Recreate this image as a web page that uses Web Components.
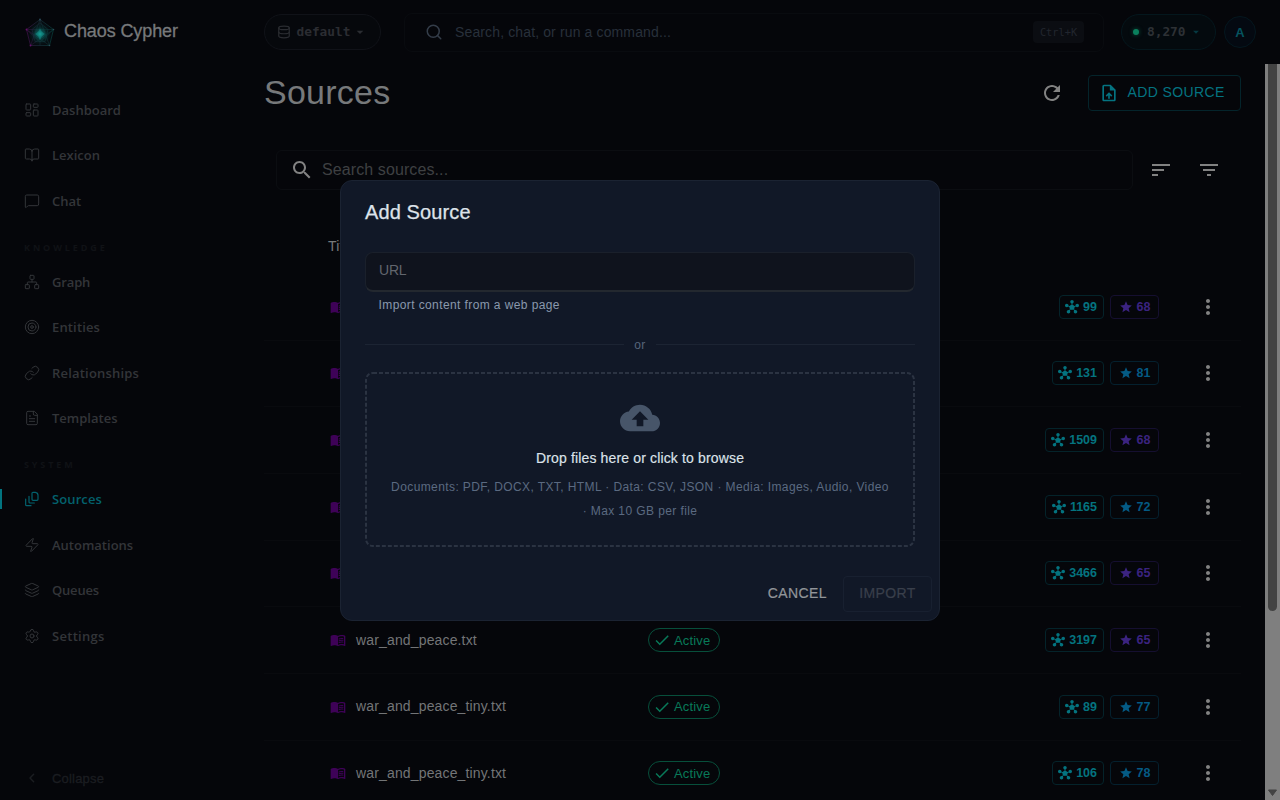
<!DOCTYPE html>
<html lang="en">
<head>
<meta charset="utf-8">
<title>Chaos Cypher – Sources</title>
<style>
html,body{margin:0;height:100%;background:#05060a;overflow:hidden}
body{font-family:"Liberation Sans",Arial,sans-serif}
</style>
</head>
<body>
<cc-app></cc-app>
<script>
const line = (w, body) => `<g fill="none" stroke="currentColor" stroke-width="${w}" stroke-linecap="round" stroke-linejoin="round">${body}</g>`;
const ICONS = {
  dashboard: line(1.5, '<rect width="7" height="9" x="3" y="3" rx="1"/><rect width="7" height="5" x="14" y="3" rx="1"/><rect width="7" height="9" x="14" y="12" rx="1"/><rect width="7" height="5" x="3" y="16" rx="1"/>'),
  lexicon: line(1.5, '<path d="M12 7v14"/><path d="M3 18a1 1 0 0 1-1-1V4a1 1 0 0 1 1-1h5a4 4 0 0 1 4 4 4 4 0 0 1 4-4h5a1 1 0 0 1 1 1v13a1 1 0 0 1-1 1h-6a3 3 0 0 0-3 3 3 3 0 0 0-3-3z"/>'),
  chat: line(1.5, '<path d="M22 17a2 2 0 0 1-2 2H6.83a2 2 0 0 0-1.42.59l-2.2 2.2A.71.71 0 0 1 2 21.29V5a2 2 0 0 1 2-2h16a2 2 0 0 1 2 2z"/>'),
  graph: line(1.5, '<rect x="16" y="16" width="6" height="6" rx="1"/><rect x="2" y="16" width="6" height="6" rx="1"/><rect x="9" y="2" width="6" height="6" rx="1"/><path d="M5 16v-3a1 1 0 0 1 1-1h12a1 1 0 0 1 1 1v3M12 12V8"/>'),
  entities: line(1.5, '<circle cx="12" cy="12" r="10"/><circle cx="12" cy="12" r="6"/><circle cx="12" cy="12" r="2"/>'),
  link: line(1.5, '<path d="M10 13a5 5 0 0 0 7.54.54l3-3a5 5 0 0 0-7.07-7.07l-1.72 1.71"/><path d="M14 11a5 5 0 0 0-7.54-.54l-3 3a5 5 0 0 0 7.07 7.07l1.71-1.71"/>'),
  template: line(1.5, '<path d="M15 2H6a2 2 0 0 0-2 2v16a2 2 0 0 0 2 2h12a2 2 0 0 0 2-2V7Z"/><path d="M14 2v4a2 2 0 0 0 2 2h4M10 9H8M16 13H8M16 17H8"/>'),
  stack: line(1.8, '<path d="M21 6.500v6c0 .8-.7 1.500-1.500 1.500h-6c-.8 0-1.500-.7-1.500-1.500v-9c0-.8.7-1.500 1.500-1.500H17c2.200.3 4 2.200 4 4.500Z"/><path d="M7.500 8v8.500c0 .8.7 1.500 1.500 1.500h6.500"/><path d="M2.500 12v8.500c0 .8.7 1.500 1.500 1.500h6.500"/>'),
  zap: line(1.5, '<path d="M4 14a1 1 0 0 1-.78-1.63l9.9-10.2a.5.5 0 0 1 .86.46l-1.92 6.02A1 1 0 0 0 13 10h7a1 1 0 0 1 .78 1.63l-9.9 10.2a.5.5 0 0 1-.86-.46l1.92-6.02A1 1 0 0 0 11 14z"/>'),
  layers: line(1.5, '<path d="M12.83 2.18a2 2 0 0 0-1.66 0L2.6 6.08a1 1 0 0 0 0 1.83l8.58 3.91a2 2 0 0 0 1.66 0l8.58-3.9a1 1 0 0 0 0-1.83z"/><path d="M2 12a1 1 0 0 0 .58.91l8.6 3.91a2 2 0 0 0 1.65 0l8.58-3.9A1 1 0 0 0 22 12"/><path d="M2 17a1 1 0 0 0 .58.91l8.6 3.91a2 2 0 0 0 1.65 0l8.58-3.9A1 1 0 0 0 22 17"/>'),
  settings: line(1.5, '<path d="M9.671 4.136a2.34 2.34 0 0 1 4.659 0 2.34 2.34 0 0 0 3.319 1.915 2.34 2.34 0 0 1 2.33 4.033 2.34 2.34 0 0 0 0 3.831 2.34 2.34 0 0 1-2.33 4.033 2.34 2.34 0 0 0-3.319 1.915 2.34 2.34 0 0 1-4.659 0 2.34 2.34 0 0 0-3.32-1.915 2.34 2.34 0 0 1-2.33-4.033 2.34 2.34 0 0 0 0-3.831A2.34 2.34 0 0 1 6.35 6.051a2.34 2.34 0 0 0 3.319-1.915"/><circle cx="12" cy="12" r="3"/>'),
  back: line(2.2, '<path d="m14.5 17.5-5.5-5.5 5.5-5.5"/>'),
  database: line(2, '<ellipse cx="12" cy="5" rx="9" ry="3"/><path d="M3 5v14a9 3 0 0 0 18 0V5"/><path d="M3 12a9 3 0 0 0 18 0"/>'),
  find: line(2, '<path d="m21 21-4.34-4.34"/><circle cx="11" cy="11" r="8"/>'),
  caret: '<path fill="currentColor" d="m7 10 5 5 5-5z"/>',
  search: '<path fill="currentColor" d="M15.5 14h-.79l-.28-.27C15.41 12.59 16 11.11 16 9.5 16 5.91 13.09 3 9.5 3S3 5.91 3 9.5 5.91 16 9.5 16c1.61 0 3.09-.59 4.23-1.57l.27.28v.79l5 4.99L20.49 19zm-6 0C7.01 14 5 11.99 5 9.5S7.01 5 9.5 5 14 7.01 14 9.5 11.99 14 9.5 14"/>',
  refresh: '<path fill="currentColor" d="M17.65 6.35C16.2 4.9 14.21 4 12 4c-4.42 0-7.99 3.58-7.99 8s3.57 8 7.99 8c3.73 0 6.84-2.55 7.73-6h-2.08c-.82 2.33-3.04 4-5.65 4-3.31 0-6-2.69-6-6s2.69-6 6-6c1.66 0 3.14.69 4.22 1.78L13 11h7V4z"/>',
  upload: '<path fill="currentColor" d="M14 2H6c-1.1 0-1.99.9-1.99 2L4 20c0 1.1.89 2 1.99 2H18c1.1 0 2-.9 2-2V8zm4 18H6V4h7v5h5zM8 15.01l1.41 1.41L11 14.84V19h2v-4.16l1.59 1.59L16 15.01 12.01 11z"/>',
  sort: '<path fill="currentColor" d="M3 18h6v-2H3zM3 6v2h18V6zm0 7h12v-2H3z"/>',
  filter: '<path fill="currentColor" d="M10 18h4v-2h-4zM3 6v2h18V6zm3 7h12v-2H6z"/>',
  more: '<path fill="currentColor" d="M12 8c1.1 0 2-.9 2-2s-.9-2-2-2-2 .9-2 2 .9 2 2 2m0 2c-1.1 0-2 .9-2 2s.9 2 2 2 2-.9 2-2-.9-2-2-2m0 6c-1.1 0-2 .9-2 2s.9 2 2 2 2-.9 2-2-.9-2-2-2"/>',
  book: '<path fill="currentColor" d="M21 5c-1.11-.35-2.33-.5-3.5-.5-1.95 0-4.05.4-5.5 1.5-1.45-1.1-3.55-1.5-5.5-1.5S2.45 4.9 1 6v14.65c0 .25.25.5.5.5.1 0 .15-.05.25-.05C3.1 20.45 5.05 20 6.5 20c1.95 0 4.05.4 5.5 1.5 1.35-.85 3.8-1.5 5.5-1.5 1.65 0 3.35.3 4.75 1.05.1.05.15.05.25.05.25 0 .5-.25.5-.5V6c-.6-.45-1.25-.75-2-1m0 13.5c-1.1-.35-2.3-.5-3.5-.5-1.7 0-4.15.65-5.5 1.5V8c1.35-.85 3.8-1.5 5.5-1.5 1.2 0 2.4.15 3.5.5z"/><path fill="currentColor" d="M17.5 10.5c.88 0 1.73.09 2.5.26V9.24c-.79-.15-1.64-.24-2.5-.24-1.7 0-3.24.29-4.5.83v1.66c1.13-.64 2.7-.99 4.5-.99M13 12.49v1.66c1.13-.64 2.7-.99 4.5-.99.88 0 1.73.09 2.5.26V11.9c-.79-.15-1.64-.24-2.5-.24-1.7 0-3.24.3-4.5.83m4.5 1.84c-1.7 0-3.24.29-4.5.83v1.66c1.13-.64 2.7-.99 4.5-.99.88 0 1.73.09 2.5.26v-1.52c-.79-.16-1.64-.24-2.5-.24"/>',
  hub: '<path fill="currentColor" d="M8.4 18.2c.38.5.6 1.12.6 1.8 0 1.66-1.34 3-3 3s-3-1.34-3-3 1.34-3 3-3c.44 0 .85.09 1.23.26l1.41-1.77c-.92-1.03-1.29-2.39-1.09-3.69l-2.03-.68c-.54.83-1.46 1.38-2.52 1.38-1.66 0-3-1.34-3-3s1.34-3 3-3 3 1.34 3 3c0 .07 0 .14-.01.21l2.03.68c.64-1.21 1.82-2.09 3.22-2.32V5.91C9.96 5.57 9 4.4 9 3c0-1.66 1.34-3 3-3s3 1.34 3 3c0 1.4-.96 2.57-2.25 2.91v2.16c1.4.23 2.58 1.11 3.22 2.32L18 9.71V9.5c0-1.66 1.34-3 3-3s3 1.34 3 3-1.34 3-3 3c-1.06 0-1.98-.55-2.52-1.37l-2.03.68c.2 1.29-.16 2.65-1.09 3.69l1.41 1.77Q17.34 17 18 17c1.66 0 3 1.34 3 3s-1.34 3-3 3-3-1.34-3-3c0-.68.22-1.3.6-1.8l-1.41-1.77c-1.35.75-3.01.76-4.37 0z"/>',
  star: '<path fill="currentColor" d="M12 17.27 18.18 21l-1.64-7.03L22 9.24l-7.19-.61L12 2 9.19 8.63 2 9.24l5.46 4.73L5.82 21z"/>',
  check: '<path fill="currentColor" d="M9 16.17 4.83 12l-1.42 1.41L9 19 21 7l-1.41-1.41z"/>',
  cloud: '<path fill="currentColor" d="M19.35 10.04C18.67 6.59 15.64 4 12 4 9.11 4 6.6 5.64 5.35 8.04 2.34 8.36 0 10.91 0 14c0 3.31 2.69 6 6 6h13c2.76 0 5-2.24 5-5 0-2.64-2.05-4.78-4.65-4.96M14 13v4h-4v-4H7l5-5 5 5z"/>'
};

function define(name, css, html) {
  customElements.define(name, class extends HTMLElement {
    constructor() {
      super();
      this.attachShadow({ mode: 'open' });
    }
    connectedCallback() {
      const body = typeof html === 'function' ? html(this) : html;
      this.shadowRoot.innerHTML = `<style>*{box-sizing:border-box}:host{box-sizing:border-box}${css}</style>${body}`;
    }
  });
}
const attr = (el, n) => el.getAttribute(n) || '';

define('cc-icon', ':host{display:block;flex:none}svg{display:block}', el => {
  const s = attr(el, 'size') || 16;
  return `<svg width="${s}" height="${s}" viewBox="0 0 24 24" aria-hidden="true">${ICONS[attr(el, 'name')]}</svg>`;
});

define('cc-logo', ':host{display:block;flex:none;width:32px;height:32px}svg{display:block}', `
<svg width="32" height="32" viewBox="0 0 32 32" fill="none">
  <defs>
    <radialGradient id="glow"><stop offset="0" stop-color="#16a79d"/><stop offset=".3" stop-color="#0a6a66" stop-opacity=".75"/><stop offset=".65" stop-color="#064844" stop-opacity=".3"/><stop offset="1" stop-color="#063f40" stop-opacity="0"/></radialGradient>
    <linearGradient id="edge" x1="2" y1="16" x2="30" y2="16" gradientUnits="userSpaceOnUse"><stop stop-color="#470c4d"/><stop offset=".4" stop-color="#1b2a37"/><stop offset="1" stop-color="#07423d"/></linearGradient>
  </defs>
  <path d="M16 3.500 29.500 13.500 25.500 29.500H6.500L2.500 13.500Z" fill="#060b10" stroke="url(#edge)" stroke-width=".7"/>
  <path d="M16 3.500 6.500 29.500 29.500 13.500H2.500L25.500 29.500ZM16 7l8 6.500-3 12H11L8 13.500ZM16 3.500v26M2.500 13.500 16 26l13.500-12.500" stroke="url(#edge)" stroke-width=".5"/>
  <circle cx="16" cy="18" r="11" fill="url(#glow)"/>
  <path d="m16 12.500 1.800 3.200L21 18l-3.200 2.200L16 24l-1.800-3.800L11 18l3.200-2.300Z" fill="#15978f" opacity=".5"/>
  <g fill="#2c4a58"><circle cx="16" cy="3.500" r=".9"/><circle cx="29.500" cy="13.500" r=".8"/><circle cx="25.500" cy="29.500" r=".8"/></g><g fill="#641068"><circle cx="2.500" cy="13.500" r=".9"/><circle cx="6.500" cy="29.500" r=".9"/></g>
</svg>`);

define('cc-topbar', `
:host{display:flex;align-items:center;height:64px;padding:0 24px}
.brand{display:flex;align-items:center;gap:8px;width:240px;color:#77797b;font-size:18px;font-weight:400;-webkit-text-stroke:.3px #77797b;letter-spacing:-.1px}
.brand cc-logo{position:relative;top:-.500px}
.brand span{position:relative;top:-1px}
.mono{font-family:"DejaVu Sans Mono","Liberation Mono",monospace}
.pill{display:flex;align-items:center;height:36px;border:1px solid #101218;border-radius:18px;font-size:12.800px;font-weight:700}
.pill span{position:relative;top:-.500px}
.db{width:116.500px;padding-left:12px;gap:5.500px;color:#2b2d32;background:#06080c}
.db cc-icon:last-child{margin-left:-4px}
.search{display:flex;align-items:center;width:700px;height:39px;margin-left:23.500px;margin-right:17px;padding:0 19px 0 20px;border:1px solid #090b0f;border-radius:8px;color:#28303b;font-size:14px;letter-spacing:.13px}
.search .txt{margin-left:12px;flex:1}
.search cc-icon{color:#343d49}
kbd{display:flex;align-items:center;justify-content:center;width:51px;height:22px;border-radius:4px;background:#0b0d12;color:#22262e;font-size:10.300px;letter-spacing:0}
.tok{width:95px;padding-left:11px;color:#2d3135;border-color:#04171d;background:#040a0e}
.dot{width:6px;height:6px;border-radius:50%;background:#0a805d;box-shadow:0 0 4px #08543e;margin-right:8px}
.tok cc-icon{color:#063942;margin-left:3px}
.ava{display:flex;align-items:center;justify-content:center;width:32px;height:32px;margin-left:8px;border:1px solid #04171f;border-radius:50%;background:#040911;color:#05535f;font-size:13px;font-weight:700}`,
`<div class="brand"><cc-logo></cc-logo><span>Chaos Cypher</span></div>
<div class="pill db mono"><cc-icon name="database" size="14"></cc-icon><span>default</span><cc-icon name="caret" size="16"></cc-icon></div>
<div class="search"><cc-icon name="find" size="18"></cc-icon><span class="txt">Search, chat, or run a command...</span><kbd class="mono">Ctrl+K</kbd></div>
<div class="pill tok mono"><i class="dot"></i><span>8,270</span><cc-icon name="caret" size="14"></cc-icon></div>
<div class="ava">A</div>`);

define('cc-nav-item', `
:host{display:flex;align-items:center;gap:12px;height:45.500px;padding-left:24px;color:#333539;font:600 13px "Open Sans","Noto Sans",sans-serif}
:host([active]){color:#03616d;background:linear-gradient(#02737f,#02737f) 0 50%/2px 20px no-repeat}
:host([quiet]){color:#1b1d21;font:400 13px "Liberation Sans",Arial,sans-serif;letter-spacing:.2px;-webkit-text-stroke:.3px #1b1d21;height:32px}`,
  el => `<cc-icon name="${attr(el, 'icon')}" size="16"></cc-icon><span><slot></slot></span>`);

define('cc-nav-label', `
:host{display:block;height:35.500px;padding:17px 0 0 24px;color:#101216;font:700 9px/13px "Open Sans","Noto Sans",sans-serif;letter-spacing:2.900px;text-transform:uppercase}`, '<slot></slot>');

define('cc-sidebar', ':host{display:flex;flex-direction:column;padding:23px 0 6px}.fill{flex:1}', `
<cc-nav-item icon="dashboard">Dashboard</cc-nav-item>
<cc-nav-item icon="lexicon">Lexicon</cc-nav-item>
<cc-nav-item icon="chat">Chat</cc-nav-item>
<cc-nav-label>Knowledge</cc-nav-label>
<cc-nav-item icon="graph" style="letter-spacing:-.15px">Graph</cc-nav-item>
<cc-nav-item icon="entities" style="letter-spacing:.15px">Entities</cc-nav-item>
<cc-nav-item icon="link" style="letter-spacing:.2px">Relationships</cc-nav-item>
<cc-nav-item icon="template">Templates</cc-nav-item>
<cc-nav-label>System</cc-nav-label>
<cc-nav-item icon="stack" active style="letter-spacing:.1px">Sources</cc-nav-item>
<cc-nav-item icon="zap">Automations</cc-nav-item>
<cc-nav-item icon="layers" style="letter-spacing:-.2px">Queues</cc-nav-item>
<cc-nav-item icon="settings" style="letter-spacing:.3px">Settings</cc-nav-item>
<div class="fill"></div>
<cc-nav-item icon="back" quiet>Collapse</cc-nav-item>`);

define('cc-count', `
:host{display:flex;align-items:center;height:24px;border:1px solid #04232a;border-radius:4px;padding:0 6px 0 5.500px;gap:4px;color:#04737f;font-size:12.500px;font-weight:700}
:host([kind=violet]){border-color:#150f30;color:#3b2380}
:host([kind=blue]){border-color:#04202e;color:#045a84}
:host([kind]){width:49px;padding:0 0 0 7.500px}`,
  el => `<cc-icon name="${el.hasAttribute('kind') ? 'star' : 'hub'}" size="14"></cc-icon><span><slot></slot></span>`);

define('cc-status', `
:host{display:inline-flex;align-items:center;vertical-align:middle;width:71.500px;height:24px;padding-left:4px;gap:3px;border:1px solid #074f3b;border-radius:12px;color:#087a59;font-size:13px;letter-spacing:.15px}`,
  '<cc-icon name="check" size="18"></cc-icon><span><slot></slot></span>');

define('cc-row', `
:host{display:grid;grid-template-columns:318px 1fr auto 98px;align-items:center;height:66.660px;padding-left:66px;border-bottom:1px solid #090a0e}
.title{display:flex;align-items:center;gap:10px;color:#737577;font-size:14px;letter-spacing:.15px}
.title span{position:relative;top:-.500px}
.title cc-icon{color:#3e0257}
.counts{display:flex;gap:6px;margin-right:-16px}
.more{color:#828282;justify-self:end;margin-right:21px}`,
  el => `<div class="title"><cc-icon name="book" size="16"></cc-icon><span>${attr(el, 'name')}</span></div>
<div>${attr(el, 'name') ? '<cc-status>Active</cc-status>' : ''}</div>
<div class="counts"><cc-count>${attr(el, 'nodes')}</cc-count><cc-count kind="${attr(el, 'kind')}">${attr(el, 'score')}</cc-count></div>
<cc-icon class="more" name="more" size="24"></cc-icon>`);

define('cc-sources', `
:host{display:block;padding:11px 24px 0;overflow:hidden}
.head{display:flex;align-items:center;height:36px}
h1{margin:0;flex:1;font-size:34px;font-weight:400;letter-spacing:.25px;color:#77797b;line-height:40px;position:relative;top:-1px}
.refresh{color:#828282;margin-right:24px}
.add{display:flex;align-items:center;gap:8.500px;width:153px;height:36px;padding-left:10px;border:1px solid #04242b;border-radius:4px;color:#047381;font-size:14px;letter-spacing:.4px}
.add span{position:relative;top:-1px}
.tools{display:flex;align-items:center;height:40px;margin:39px 20px 0 12px}
.field{display:flex;align-items:center;gap:8px;width:857px;height:40px;padding-left:13px;border:1px solid #0b0d11;border-radius:6px;color:#3e4042;font-size:16px;letter-spacing:.1px}
.field cc-icon{color:#828282}
.tools>cc-icon{color:#828282;margin-left:24px}
.tools>cc-icon:nth-child(2){margin-left:15.500px}
.th{height:56px;margin-top:28px;padding-left:64px;line-height:56px;font-size:14px;letter-spacing:.15px;color:#77797b}`,
`<div class="head"><h1>Sources</h1><cc-icon class="refresh" name="refresh" size="24"></cc-icon><div class="add"><cc-icon name="upload" size="20"></cc-icon><span>ADD SOURCE</span></div></div>
<div class="tools"><div class="field"><cc-icon name="search" size="24"></cc-icon><span>Search sources...</span></div><cc-icon name="sort" size="24"></cc-icon><cc-icon name="filter" size="24"></cc-icon></div>
<div class="th">Title</div>
` + [['', 99, 68, 'violet'], ['', 131, 81, 'blue'], ['', 1509, 68, 'violet'], ['', 1165, 72, 'blue'], ['', 3466, 65, 'violet'],
     ['war_and_peace.txt', 3197, 65, 'violet'], ['war_and_peace_tiny.txt', 89, 77, 'blue'], ['war_and_peace_tiny.txt', 106, 78, 'blue']]
  .map(r => `<cc-row name="${r[0]}" nodes="${r[1]}" score="${r[2]}" kind="${r[3]}"></cc-row>`).join(''));

define('cc-scrollbar', `
:host{display:flex;flex-direction:column;align-items:center;background:#7f7f7f;padding-bottom:4px}
.thumb{width:9px;height:547px;background:#434343;border-radius:0 0 4.500px 4.500px}
.sp{flex:1}`, '<div class="thumb"></div><div class="sp"></div><svg width="9" height="7"><path d="M.5 1h8L4.500 6.500z" fill="#434343" stroke="#434343" stroke-linejoin="round"/></svg>');

define('cc-dialog', `
:host{display:flex;flex-direction:column;width:600px;height:441px;border:1px solid #1b2332;border-radius:12px;background:#111827;padding:0 7px 8px 24px}
h2{margin:19px 0 0;font-size:20px;line-height:24px;font-weight:400;-webkit-text-stroke:.25px #dde3ea;letter-spacing:.12px;color:#dde3ea}
.body{margin-right:17px}
.field{height:40px;margin-top:28px;padding-left:13px;border:1px solid #1a202b;border-bottom:2px solid #23282f;border-radius:8px;background:#0f131d;color:#62666e;font-size:14px;line-height:35px;letter-spacing:-.2px}
.help{margin:5px 0 0 13.500px;font-size:12px;line-height:16px;letter-spacing:.4px;color:#8a99ad}
.or{display:flex;align-items:center;gap:10px;margin-top:24px;height:16px;font-size:12px;letter-spacing:.4px;color:#56647a}
.or::before,.or::after{content:"";flex:1;height:1px;background:#1c2433}
.drop{position:relative;display:flex;flex-direction:column;align-items:center;height:175px;margin-top:19px;padding:26px 24px 0;text-align:center}
.outline{position:absolute;inset:0;width:100%;height:100%}
.drop cc-icon{color:#475569}
.drop b{font-weight:400;font-size:14px;line-height:20px;letter-spacing:.15px;margin-top:10px;color:#dde3ea;-webkit-text-stroke:.15px #dde3ea}
.drop small{font-size:12px;line-height:24px;letter-spacing:.4px;margin-top:7px;color:#5b6a81}
.acts{display:flex;justify-content:flex-end;align-items:center;gap:16px;margin-top:auto;font-size:14px;letter-spacing:.4px;color:#929599;-webkit-text-stroke:.2px currentColor}
.imp{display:flex;align-items:center;justify-content:center;width:89px;height:36px;border:1px solid #182030;border-radius:4px;color:#393f4b}
.acts span{position:relative;top:-1px}`, `
<h2><slot name="title"></slot></h2>
<div class="body">
<div class="field">URL</div>
<div class="help">Import content from a web page</div>
<div class="or">or</div>
<div class="drop"><svg class="outline" viewBox="0 0 550 175" aria-hidden="true"><rect x="1" y="1" width="548" height="173" rx="7" fill="none" stroke="#2b3342" stroke-width="2" stroke-dasharray="4 2"/></svg><cc-icon name="cloud" size="40"></cc-icon><b>Drop files here or click to browse</b><small>Documents: PDF, DOCX, TXT, HTML · Data: CSV, JSON · Media: Images, Audio, Video · Max 10 GB per file</small></div>
</div>
<div class="acts"><span>CANCEL</span><div class="imp"><span>IMPORT</span></div></div>`);

define('cc-app', `
:host{display:grid;grid-template-columns:240px 1fr 15px;grid-template-rows:64px minmax(0,1fr);width:1280px;height:800px;overflow:hidden;background:#05060a}
cc-topbar{grid-column:1/-1}
.overlay{position:fixed;inset:0;display:flex;align-items:center;justify-content:center}`, `
<cc-topbar></cc-topbar><cc-sidebar></cc-sidebar><cc-sources></cc-sources><cc-scrollbar></cc-scrollbar>
<div class="overlay"><cc-dialog><span slot="title">Add Source</span></cc-dialog></div>`);
</script>
</body>
</html>
